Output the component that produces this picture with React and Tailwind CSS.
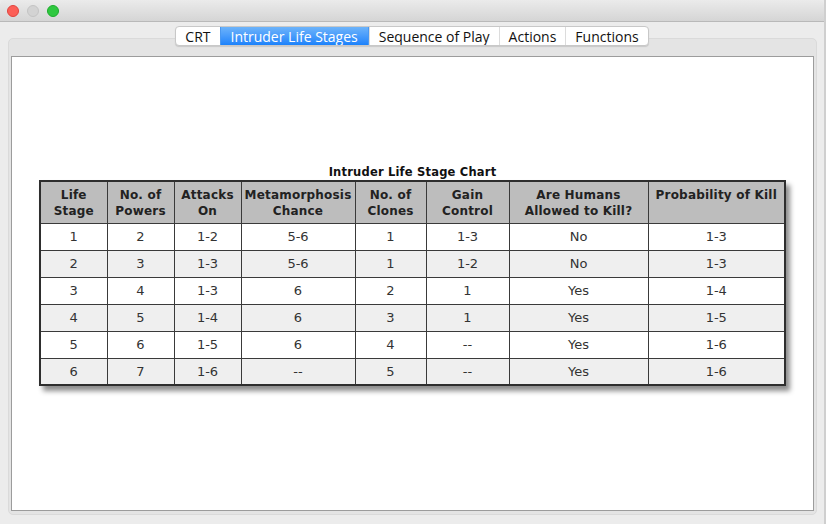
import React from 'react';

const tabs = ['CRT', 'Intruder Life Stages', 'Sequence of Play', 'Actions', 'Functions'];

const cols = [
  { w: 67, h: ['Life', 'Stage'] },
  { w: 67, h: ['No. of', 'Powers'] },
  { w: 67, h: ['Attacks', 'On'] },
  { w: 114, h: ['Metamorphosis', 'Chance'] },
  { w: 71, h: ['No. of', 'Clones'] },
  { w: 83, h: ['Gain', 'Control'] },
  { w: 139, h: ['Are Humans', 'Allowed to Kill?'] },
  { w: 137, h: ['Probability of Kill'] },
];

const rows = [
  ['1', '2', '1-2', '5-6', '1', '1-3', 'No', '1-3'],
  ['2', '3', '1-3', '5-6', '1', '1-2', 'No', '1-3'],
  ['3', '4', '1-3', '6', '2', '1', 'Yes', '1-4'],
  ['4', '5', '1-4', '6', '3', '1', 'Yes', '1-5'],
  ['5', '6', '1-5', '6', '4', '--', 'Yes', '1-6'],
  ['6', '7', '1-6', '--', '5', '--', 'Yes', '1-6'],
];

function TrafficLights() {
  return (
    <div className="flex items-center gap-[8px] pl-[7px]">
      <span className="w-[12px] h-[12px] rounded-full bg-[#fc5f57] border border-[#e0443e]"></span>
      <span className="w-[12px] h-[12px] rounded-full bg-[#d3d3d3] border border-[#c4c4c4]"></span>
      <span className="w-[12px] h-[12px] rounded-full bg-[#2fc840] border border-[#1dac2c]"></span>
    </div>
  );
}

function Tabs() {
  return (
    <div className="relative z-10 flex justify-center pt-[4px]">
      <div className="flex h-[20px] rounded-[4px] border border-[#c8c8c8] bg-white shadow-[0_1px_1px_rgba(0,0,0,0.12)] overflow-hidden">
        {tabs.map((t, i) => {
          const active = i === 1;
          return (
            <div
              key={t}
              className={
                active
                  ? 'flex items-center px-[10px] text-[14px] text-white bg-gradient-to-b from-[#6cb3fa] to-[#1a82fb] border-x border-[#4a98f0]'
                  : 'flex items-center px-[9px] text-[14px] text-[#111] border-l border-[#dcdcdc] first:border-l-0'
              }
            >
              {t}
            </div>
          );
        })}
      </div>
    </div>
  );
}

function LifeStageChart() {
  return (
    <div className="flex flex-col items-center" style={{ fontFamily: '"DejaVu Sans", sans-serif' }}>
      <div className="text-[11.5px] font-bold text-[#111] leading-[14px] mb-[1px] tracking-[0.2px]">Intruder Life Stage Chart</div>
      <table className="border-collapse border-2 border-[#2e2e2e] shadow-[4px_5px_5px_rgba(0,0,0,0.45)]">
        <thead>
          <tr className="bg-[#bdbdbd] h-[42px]">
            {cols.map((c, i) => (
              <th
                key={i}
                style={{ width: c.w }}
                className="border-[1.5px] border-[#3a3a3a] align-top pt-[5px] text-[12px] leading-[16px] font-bold text-[#222] tracking-[0.2px]"
              >
                {c.h.map((l, j) => (
                  <div key={j}>{l}</div>
                ))}
              </th>
            ))}
          </tr>
        </thead>
        <tbody>
          {rows.map((r, i) => (
            <tr key={i} className={i % 2 === 0 ? 'bg-white h-[27px]' : 'bg-[#efefef] h-[27px]'}>
              {r.map((v, j) => (
                <td key={j} className="border-[1.5px] border-[#3a3a3a] text-center text-[13px] text-[#333] p-0">
                  {v}
                </td>
              ))}
            </tr>
          ))}
        </tbody>
      </table>
    </div>
  );
}

export default function App() {
  return (
    <div
      className="w-[826px] h-[524px] bg-[#ececec] flex flex-col overflow-hidden border-r-2 border-[#cfcfcf]"
      style={{ fontFamily: '"Open Sans", "Noto Sans", sans-serif' }}
    >
      <div className="h-[22px] shrink-0 flex items-center rounded-t-[5px] bg-gradient-to-b from-[#ebebeb] to-[#d5d5d5] border-b border-[#b9b9b9]">
        <TrafficLights />
      </div>
      <Tabs />
      <div className="ml-[8px] mr-[7px] -mt-[8px] mb-[9px] flex-1 flex flex-col rounded-[5px] bg-[#e4e4e4] px-[2px] pt-[17px] pb-[3px] border border-[#dadada]">
        <div className="flex-1 bg-white border border-[#9c9c9c] pt-[108px]">
          <LifeStageChart />
        </div>
      </div>
    </div>
  );
}
